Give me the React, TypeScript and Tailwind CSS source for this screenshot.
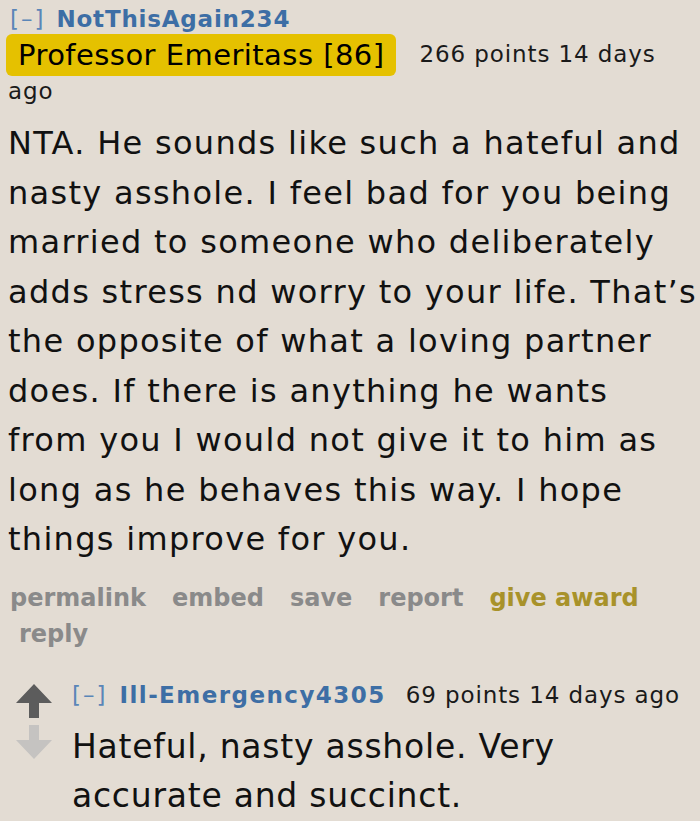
import React from "react";

const Arrow = ({ up, color }: { up: boolean; color: string }) => (
  <svg width="36" height="34" viewBox="0 0 36 34" className={up ? "" : "rotate-180"}>
    <path d="M18 0 L36 19 L23 19 L23 34 L13 34 L13 19 L0 19 Z" fill={color} />
  </svg>
);

const bodyLines = [
  "NTA. He sounds like such a hateful and",
  "nasty asshole. I feel bad for you being",
  "married to someone who deliberately",
  "adds stress nd worry to your life. That’s",
  "the opposite of what a loving partner",
  "does. If there is anything he wants",
  "from you I would not give it to him as",
  "long as he behaves this way. I hope",
  "things improve for you.",
];

export default function App() {
  return (
    <div
      className="min-h-screen w-[700px] bg-[#e3dcd3] overflow-hidden whitespace-nowrap"
      style={{ fontFamily: '"DejaVu Sans", Verdana, sans-serif' }}
    >
      {/* first comment */}
      <div className="pl-[8px]">
        <div className="flex pt-[4px] text-[23px] leading-[30px] tracking-[0.8px]">
          <span className="text-[#5a86b8] pl-[2px] tracking-[2px]">[–]</span>
          <span className="ml-[11px] font-bold text-[#3d6ea5]">NotThisAgain234</span>
        </div>
        <div className="flex items-start">
          <span className="bg-[#e5c100] rounded-[6px] h-[42px] px-[12px] text-[29px] leading-[42px] tracking-[0.45px] text-black -ml-[2px]">
            Professor Emeritass [86]
          </span>
          <span className="ml-[23px] text-[23px] leading-[40px] tracking-[0.9px] text-[#1a1a1a]">
            266 points 14 days
          </span>
        </div>
        <div className="text-[23px] leading-[30px] tracking-[0.9px] text-[#1a1a1a]">ago</div>

        <div className="mt-[13px] text-[32px] leading-[49.5px] tracking-[1.3px] text-[#111]">
          {bodyLines.map((l) => (
            <div key={l}>{l}</div>
          ))}
        </div>

        <div className="mt-[15px] text-[24px] leading-[36px] font-bold text-[#8a8a8a] pl-[2px]">
          <div className="flex gap-[26px]">
            <span>permalink</span>
            <span>embed</span>
            <span>save</span>
            <span>report</span>
            <span className="text-[#a8922a]">give award</span>
          </div>
          <div className="pl-[9px]">reply</div>
        </div>
      </div>

      {/* reply */}
      <div className="flex mt-[28px] pl-[16px]">
        <div className="flex flex-col gap-[7px] pt-[4px] w-[56px]">
          <Arrow up color="#5c5c5c" />
          <Arrow up={false} color="#c5c3c1" />
        </div>
        <div>
          <div className="flex text-[23px] leading-[30px]">
            <span className="text-[#5a86b8] tracking-[2px]">[–]</span>
            <span className="ml-[12px] font-bold text-[#3d6ea5] tracking-[1.45px]">Ill-Emergency4305</span>
            <span className="ml-[20px] text-[#1a1a1a] tracking-[0.9px]">69 points 14 days ago</span>
          </div>
          <div className="mt-[12px] text-[33px] leading-[49px] tracking-[0.75px] text-[#111]">
            <div>Hateful, nasty asshole. Very</div>
            <div>accurate and succinct.</div>
          </div>
        </div>
      </div>
    </div>
  );
}
